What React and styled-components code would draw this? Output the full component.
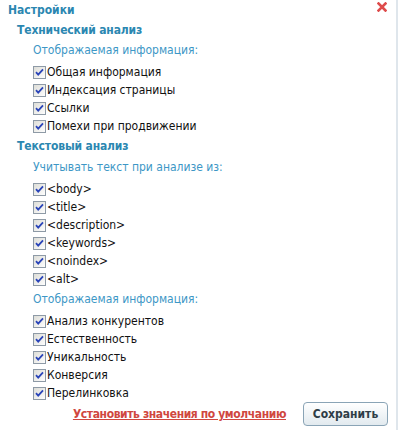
import React from "react";
import styled, { createGlobalStyle } from "styled-components";

const FONT = `"DejaVu Sans Condensed", "DejaVu Sans", sans-serif`;

const Global = createGlobalStyle`
  html, body { margin: 0; padding: 0; background: #fff; }
  body { font-family: ${FONT}; font-stretch: condensed; }
`;

const Panel = styled.div`
  width: 398px;
  height: 430px;
  box-sizing: border-box;
  border-right: 2px solid #dfe6ec;
  position: relative;
  padding: 0 0 0 8px;
  font-family: ${FONT};
  font-stretch: condensed;
`;

const Title = styled.div`
  font-size: 12px;
  font-weight: bold;
  color: #2b87b1;
  height: 20px;
  line-height: 20px;
`;

const Close = styled.button`
  position: absolute;
  top: 2px;
  right: 9px;
  width: 10px;
  height: 10px;
  padding: 0;
  border: 0;
  background: none;
  display: flex;
`;

const Section = styled.div`
  padding-left: 9px;
`;

const SectionTitle = styled.div`
  font-size: 12px;
  font-weight: bold;
  color: #2b87b1;
  height: 21px;
  line-height: 21px;
  letter-spacing: -0.15px;
  margin-top: ${(p) => p.$top || 0}px;
`;

const Group = styled.div`
  padding-left: 16px;
`;

const GroupTitle = styled.div`
  font-size: 12px;
  color: #3d97c6;
  height: 22px;
  line-height: 18px;
  margin-top: ${(p) => p.$top || 0}px;
`;

const Row = styled.label`
  display: flex;
  align-items: center;
  height: 18px;
  font-size: 12px;
  color: #111;
  gap: 1px;
`;

const Footer = styled.div`
  display: flex;
  align-items: center;
  justify-content: flex-end;
  gap: 17px;
  padding-right: 8px;
`;

const ResetLink = styled.a`
  font-size: 12px;
  font-weight: bold;
  color: #d0473f;
  text-decoration: underline;
  letter-spacing: -0.4px;
  cursor: pointer;
`;

const SaveButton = styled.button`
  width: 85px;
  height: 24px;
  border: 1px solid #8aa4b6;
  border-radius: 4px;
  background: linear-gradient(#ffffff, #e2eaef);
  font-family: ${FONT};
  font-stretch: condensed;
  font-size: 12px;
  font-weight: bold;
  color: #2f3d47;
  padding: 0;
`;

const CheckBox = () => (
  <svg width="13" height="13" viewBox="0 0 13 13">
    <defs>
      <linearGradient id="cbg" x1="0" y1="0" x2="1" y2="1">
        <stop offset="0" stopColor="#dcdcd6" />
        <stop offset="1" stopColor="#ffffff" />
      </linearGradient>
    </defs>
    <rect x="0.5" y="0.5" width="12" height="12" fill="url(#cbg)" stroke="#8e9aa6" />
    <path d="M3 6.2 L5.2 8.6 L10 3.4" fill="none" stroke="#2a44b8" strokeWidth="1.8" />
  </svg>
);

const Item = ({ children }) => (
  <Row>
    <CheckBox />
    <span>{children}</span>
  </Row>
);

export default function App() {
  return (
    <>
      <Global />
      <Panel>
        <Title>Настройки</Title>
        <Close aria-label="close">
          <svg width="10" height="10" viewBox="0 0 10 10">
            <path d="M1.5 1.5 L8.5 8.5 M8.5 1.5 L1.5 8.5" stroke="#de4b4b" strokeWidth="2.6" strokeLinecap="square" />
          </svg>
        </Close>
        <Section>
          <SectionTitle>Технический анализ</SectionTitle>
          <Group>
            <GroupTitle>Отображаемая информация:</GroupTitle>
            <Item>Общая информация</Item>
            <Item>Индексация страницы</Item>
            <Item>Ссылки</Item>
            <Item>Помехи при продвижении</Item>
          </Group>
          <SectionTitle $top={1}>Текстовый анализ</SectionTitle>
          <Group>
            <GroupTitle $top={1}>Учитывать текст при анализе из:</GroupTitle>
            <Item>&lt;body&gt;</Item>
            <Item>&lt;title&gt;</Item>
            <Item>&lt;description&gt;</Item>
            <Item>&lt;keywords&gt;</Item>
            <Item>&lt;noindex&gt;</Item>
            <Item>&lt;alt&gt;</Item>
            <GroupTitle $top={2}>Отображаемая информация:</GroupTitle>
            <Item>Анализ конкурентов</Item>
            <Item>Естественность</Item>
            <Item>Уникальность</Item>
            <Item>Конверсия</Item>
            <Item>Перелинковка</Item>
          </Group>
        </Section>
        <Footer>
          <ResetLink>Установить значения по умолчанию</ResetLink>
          <SaveButton>Сохранить</SaveButton>
        </Footer>
      </Panel>
    </>
  );
}
